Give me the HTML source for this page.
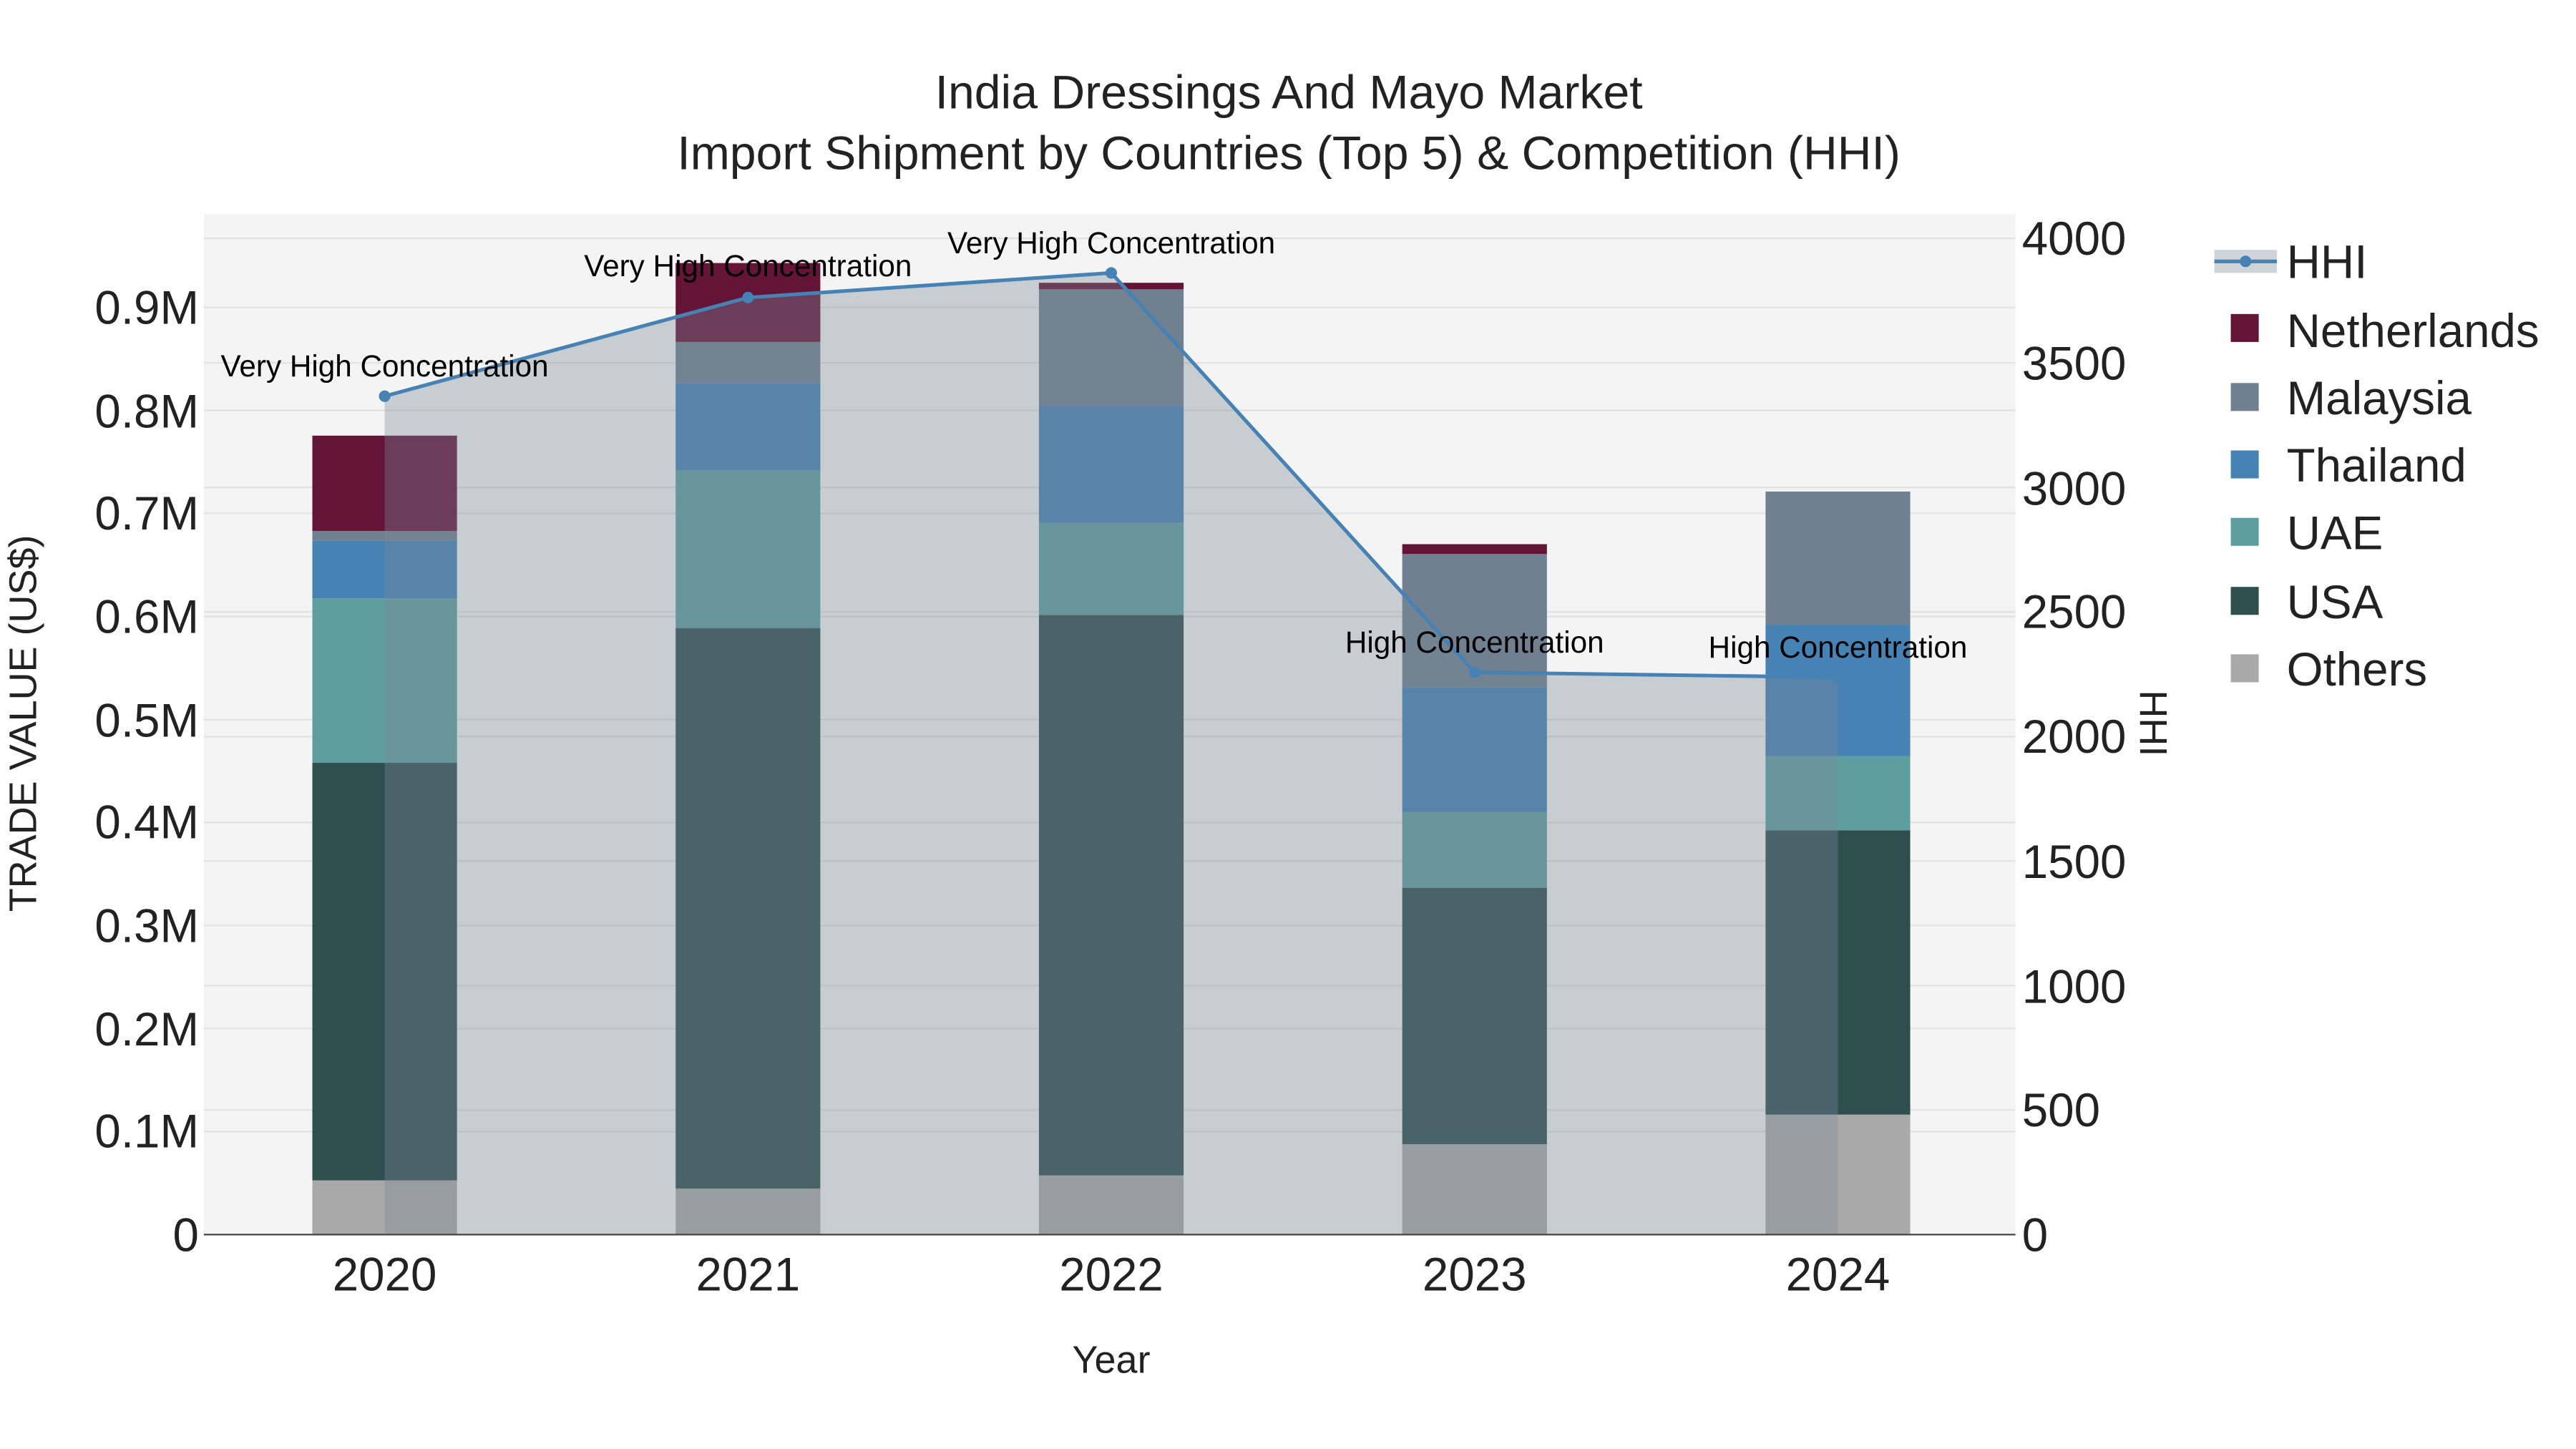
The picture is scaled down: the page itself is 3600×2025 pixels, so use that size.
<!DOCTYPE html>
<html><head><meta charset="utf-8"><style>
html,body{margin:0;padding:0;background:#fff;}
svg{display:block;font-family:"Liberation Sans",sans-serif;}
</style></head><body>
<svg width="3600" height="2025" viewBox="0 0 1567 881.4" preserveAspectRatio="none" xmlns="http://www.w3.org/2000/svg">
<rect x="0" y="0" width="1570" height="885" fill="#fff"/>
<rect x="124" y="130" width="1102" height="621" fill="#f4f4f4"/>
<g stroke="#e2e2e2" stroke-width="1">
<line x1="124" x2="1226" y1="688.3" y2="688.3"/><line x1="124" x2="1226" y1="625.7" y2="625.7"/>
<line x1="124" x2="1226" y1="563" y2="563"/><line x1="124" x2="1226" y1="500.3" y2="500.3"/>
<line x1="124" x2="1226" y1="437.7" y2="437.7"/><line x1="124" x2="1226" y1="375" y2="375"/>
<line x1="124" x2="1226" y1="312.3" y2="312.3"/><line x1="124" x2="1226" y1="249.6" y2="249.6"/>
<line x1="124" x2="1226" y1="187" y2="187"/>
<line x1="124" x2="1226" y1="675.2" y2="675.2"/><line x1="124" x2="1226" y1="599.5" y2="599.5"/>
<line x1="124" x2="1226" y1="523.7" y2="523.7"/><line x1="124" x2="1226" y1="448" y2="448"/>
<line x1="124" x2="1226" y1="372.2" y2="372.2"/><line x1="124" x2="1226" y1="296.5" y2="296.5"/>
<line x1="124" x2="1226" y1="220.7" y2="220.7"/><line x1="124" x2="1226" y1="145" y2="145"/>
</g>
<g>
<rect x="190" y="718" width="88" height="33" fill="#a9a9a9"/>
<rect x="190" y="464" width="88" height="254" fill="#2f4f4f"/>
<rect x="190" y="364" width="88" height="100" fill="#5f9ea0"/>
<rect x="190" y="329" width="88" height="35" fill="#4682b4"/>
<rect x="190" y="323" width="88" height="6" fill="#708090"/>
<rect x="190" y="265" width="88" height="58" fill="#641436"/>
<rect x="411" y="723" width="88" height="28" fill="#a9a9a9"/>
<rect x="411" y="382" width="88" height="341" fill="#2f4f4f"/>
<rect x="411" y="286" width="88" height="96" fill="#5f9ea0"/>
<rect x="411" y="233" width="88" height="53" fill="#4682b4"/>
<rect x="411" y="208" width="88" height="25" fill="#708090"/>
<rect x="411" y="160" width="88" height="48" fill="#641436"/>
<rect x="632" y="715" width="88" height="36" fill="#a9a9a9"/>
<rect x="632" y="374" width="88" height="341" fill="#2f4f4f"/>
<rect x="632" y="318" width="88" height="56" fill="#5f9ea0"/>
<rect x="632" y="247" width="88" height="71" fill="#4682b4"/>
<rect x="632" y="176" width="88" height="71" fill="#708090"/>
<rect x="632" y="172" width="88" height="4" fill="#641436"/>
<rect x="853" y="696" width="88" height="55" fill="#a9a9a9"/>
<rect x="853" y="540" width="88" height="156" fill="#2f4f4f"/>
<rect x="853" y="494" width="88" height="46" fill="#5f9ea0"/>
<rect x="853" y="418" width="88" height="76" fill="#4682b4"/>
<rect x="853" y="337" width="88" height="81" fill="#708090"/>
<rect x="853" y="331" width="88" height="6" fill="#641436"/>
<rect x="1074" y="678" width="88" height="73" fill="#a9a9a9"/>
<rect x="1074" y="505" width="88" height="173" fill="#2f4f4f"/>
<rect x="1074" y="460" width="88" height="45" fill="#5f9ea0"/>
<rect x="1074" y="380" width="88" height="80" fill="#4682b4"/>
<rect x="1074" y="299" width="88" height="81" fill="#708090"/>
</g>
<polygon points="234,751 234,241 455,181 676,166 897,409 1118,412 1118,751" fill="rgb(123,135,150)" fill-opacity="0.36"/>
<polyline points="234,241 455,181 676,166 897,409 1118,412" fill="none" stroke="#4682b4" stroke-width="2.2"/>
<g fill="#4682b4"><circle cx="234" cy="241" r="3.5"/><circle cx="455" cy="181" r="3.5"/><circle cx="676" cy="166" r="3.5"/><circle cx="897" cy="409" r="3.5"/><circle cx="1118" cy="412" r="3.5"/></g>
<line x1="124" x2="1226" y1="751" y2="751" stroke="#444" stroke-width="1"/>
<g font-size="18.4" fill="#000" text-anchor="middle">
<text x="234" y="229">Very High Concentration</text>
<text x="455" y="168">Very High Concentration</text>
<text x="676" y="154">Very High Concentration</text>
<text x="897" y="397">High Concentration</text>
<text x="1118" y="400">High Concentration</text>
</g>
<g font-size="28.8" fill="#222" text-anchor="middle">
<text x="784" y="66">India Dressings And Mayo Market</text>
<text x="784" y="103">Import Shipment by Countries (Top 5) &amp; Competition (HHI)</text>
</g>
<g font-size="28.5" fill="#222" text-anchor="end">
<text x="121" y="761">0</text><text x="121" y="698">0.1M</text><text x="121" y="636">0.2M</text>
<text x="121" y="573">0.3M</text><text x="121" y="510">0.4M</text><text x="121" y="448">0.5M</text>
<text x="121" y="385">0.6M</text><text x="121" y="322">0.7M</text><text x="121" y="260">0.8M</text>
<text x="121" y="197">0.9M</text>
</g>
<g font-size="28.5" fill="#222" text-anchor="start">
<text x="1230" y="761">0</text><text x="1230" y="685">500</text><text x="1230" y="610">1000</text>
<text x="1230" y="534">1500</text><text x="1230" y="458">2000</text><text x="1230" y="382">2500</text>
<text x="1230" y="307">3000</text><text x="1230" y="231">3500</text><text x="1230" y="155">4000</text>
</g>
<g font-size="28.5" fill="#222" text-anchor="middle">
<text x="234" y="785">2020</text><text x="455" y="785">2021</text><text x="676" y="785">2022</text>
<text x="897" y="785">2023</text><text x="1118" y="785">2024</text>
</g>
<text x="676" y="835" font-size="23.5" fill="#222" text-anchor="middle">Year</text>
<text transform="translate(22,440) rotate(-90)" font-size="23.5" fill="#222" text-anchor="middle">TRADE VALUE (US$)</text>
<text transform="translate(1302,440) rotate(90)" font-size="23.5" fill="#222" text-anchor="middle">HHI</text>
<rect x="1347" y="152" width="38" height="14" fill="rgb(123,135,150)" fill-opacity="0.36"/>
<line x1="1347" x2="1385" y1="159" y2="159" stroke="#4682b4" stroke-width="2.2"/>
<circle cx="1366" cy="159" r="3.5" fill="#4682b4"/>
<rect x="1357" y="191" width="17" height="17" fill="#641436"/>
<rect x="1357" y="233" width="17" height="17" fill="#708090"/>
<rect x="1357" y="274" width="17" height="17" fill="#4682b4"/>
<rect x="1357" y="315" width="17" height="17" fill="#5f9ea0"/>
<rect x="1357" y="357" width="17" height="17" fill="#2f4f4f"/>
<rect x="1357" y="398" width="17" height="17" fill="#a9a9a9"/>
<g font-size="28.5" fill="#222">
<text x="1391" y="169">HHI</text><text x="1391" y="211">Netherlands</text><text x="1391" y="252">Malaysia</text>
<text x="1391" y="293">Thailand</text><text x="1391" y="334">UAE</text><text x="1391" y="376">USA</text>
<text x="1391" y="417">Others</text>
</g>
</svg>
</body></html>
